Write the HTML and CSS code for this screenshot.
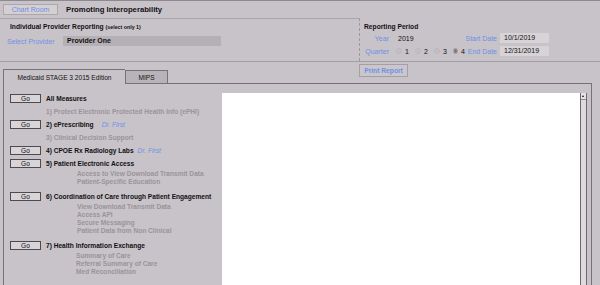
FILE: index.html
```html
<!DOCTYPE html>
<html lang="en">
<head>
    <meta charset="UTF-8">
    <title>Promoting Interoperability</title>
    <link rel="stylesheet" href="styles.css">
</head>
<body>
    <div class="topbar">
        <button class="chart-btn">Chart Room</button>
        <span class="page-title">Promoting Interoperability</span>
    </div>

    <div class="header">
        <div class="provider">
            <div class="section-title indent">Individual Provider Reporting <small>(select only 1)</small></div>
            <div class="provider-row">
                <span class="label provider-label">Select Provider</span>
                <div class="field provider-field">Provider One</div>
            </div>
        </div>
        <div class="period">
            <div class="section-title">Reporting Period</div>
            <div class="period-row">
                <span class="label plabel">Year</span>
                <div class="pmid"><span class="year">2019</span></div>
                <span class="label dlabel">Start Date</span>
                <div class="field date">10/1/2019</div>
            </div>
            <div class="period-row">
                <span class="label plabel">Quarter</span>
                <div class="pmid radios">
                    <span class="radio"><span class="dot"></span>1</span>
                    <span class="radio"><span class="dot"></span>2</span>
                    <span class="radio"><span class="dot"></span>3</span>
                    <span class="radio"><span class="dot on"></span>4</span>
                </div>
                <span class="label dlabel">End Date</span>
                <div class="field date">12/31/2019</div>
            </div>
        </div>
    </div>

    <div class="subrow">
        <div class="tabs">
            <div class="tab active">Medicaid STAGE 3 2015 Edition</div>
            <div class="tab">MIPS</div>
        </div>
        <button class="print-btn">Print Report</button>
    </div>

    <div class="panel">
        <div class="measures">
            <div class="row"><button class="go">Go</button><span class="measure">All Measures</span></div>
            <div class="row"><span class="measure off">1) Protect Electronic Protected Health Info (ePHI)</span></div>
            <div class="row"><button class="go">Go</button><span class="measure">2) ePrescribing</span><span class="vendor">Dr. First</span></div>
            <div class="row"><span class="measure off">3) Clinical Decision Support</span></div>
            <div class="row"><button class="go">Go</button><span class="measure">4) CPOE Rx Radiology Labs</span><span class="vendor short">Dr. First</span></div>
            <div class="row"><button class="go">Go</button><span class="measure">5) Patient Electronic Access</span></div>
            <div class="sub">Access to View Download Transmit Data</div>
            <div class="sub">Patient-Specific Education</div>
            <div class="row gap"><button class="go">Go</button><span class="measure">6) Coordination of Care through Patient Engagement</span></div>
            <div class="sub">View Download Transmit Data</div>
            <div class="sub">Access API</div>
            <div class="sub">Secure Messaging</div>
            <div class="sub">Patient Data from Non Clinical</div>
            <div class="row gap"><button class="go">Go</button><span class="measure">7) Health Information Exchange</span></div>
            <div class="sub left">Summary of Care</div>
            <div class="sub left">Referral Summary of Care</div>
            <div class="sub left">Med Reconciliation</div>
        </div>
        <div class="report"></div>
        <div class="scrollbar">
            <div class="scroll-up"></div>
        </div>
    </div>
</body>
</html>
```

FILE: styles.css
```css
body {
    margin: 0;
    height: 285px;
    overflow: hidden;
    background-color: #c8c3c8;
    font-family: "Liberation Sans", Arial, sans-serif;
    color: #111;
}

button {
    font-family: inherit;
    padding: 0;
    cursor: pointer;
}

.topbar {
    height: 17px;
    border-top: 1px solid #8e898e;
    display: flex;
    align-items: center;
    padding-left: 3px;
}

.chart-btn {
    width: 55px;
    height: 11px;
    background-color: #d3cfd3;
    border: 1px solid #aca7ac;
    color: #6e91e6;
    font-size: 7px;
    line-height: 9px;
}

.page-title {
    margin-left: 8px;
    font-size: 7.7px;
    font-weight: bold;
}

.header {
    display: flex;
    height: 43px;
    border-bottom: 1px solid #a39ea3;
}

.provider {
    width: 352px;
    padding-left: 7px;
    border-top: 1px solid #aaa5aa;
    border-right: 1px dashed #9d989d;
}

.section-title {
    padding-top: 4px;
    font-size: 6.7px;
    line-height: 9px;
    font-weight: bold;
}

.section-title small {
    font-size: 5.3px;
}

.indent {
    margin-left: 3px;
    padding-top: 3px;
}

.label {
    color: #6e91e6;
    font-size: 7px;
    white-space: nowrap;
}

.provider-row {
    display: flex;
    align-items: center;
    margin-top: 4px;
    height: 10px;
}

.provider-label {
    width: 56px;
}

.field {
    height: 10px;
    line-height: 10px;
    font-size: 7px;
    padding-left: 4px;
    box-sizing: border-box;
}

.provider-field {
    width: 158px;
    background-color: #b5b0b5;
    font-weight: bold;
}

.period {
    flex: 1;
    padding-left: 4px;
}

.period-row {
    display: flex;
    align-items: center;
    height: 10px;
    margin-top: 2px;
    margin-left: -4px;
}

.period-row + .period-row {
    margin-top: 3px;
}

.plabel {
    width: 29px;
    text-align: right;
}

.pmid {
    width: 76px;
    flex-shrink: 0;
    font-size: 7px;
    padding-left: 9px;
    box-sizing: border-box;
}

.radios {
    display: flex;
    padding-left: 7px;
}

.radio {
    display: flex;
    align-items: center;
    width: 19px;
    flex-shrink: 0;
}

.radio:last-child {
    width: 12px;
}

.dot {
    width: 4px;
    height: 4px;
    border: 1px solid #bdb8bd;
    border-radius: 50%;
    margin-right: 3px;
    background-color: #c4bfc4;
}

.dot.on {
    background-color: #7d787d;
    border-color: #a9a4a9;
}

.dlabel {
    width: 32px;
    text-align: right;
}

.date {
    width: 49px;
    margin-left: 3px;
    background-color: #d7d3d7;
}

.subrow {
    display: flex;
    height: 21px;
    padding-left: 3px;
}

.tabs {
    width: 356px;
    display: flex;
    align-items: flex-end;
}

.tab {
    height: 13px;
    line-height: 13px;
    font-size: 6.6px;
    text-align: center;
    border: 1px solid #77727a;
    border-bottom: none;
    box-sizing: border-box;
    background-color: #b8b3b8;
    width: 43px;
}

.tab.active {
    width: 122px;
    height: 15px;
    line-height: 15px;
    margin-bottom: -1px;
    background-color: #c8c3c8;
    position: relative;
    z-index: 1;
    border-right: none;
}

.print-btn {
    align-self: flex-start;
    margin-top: 2px;
    width: 49px;
    height: 13px;
    background-color: #cbc6cb;
    border: 1px solid #a5a0a5;
    color: #6e91e6;
    font-size: 6.7px;
    font-weight: bold;
}

.panel {
    display: flex;
    height: 220px;
    width: 587px;
    margin-left: 3px;
    border: 1px solid #77727a;
}

.measures {
    width: 218px;
    padding-top: 8px;
    font-size: 6.6px;
    font-weight: bold;
}

.row {
    height: 13px;
    display: flex;
    align-items: center;
    padding-left: 6px;
}

.row.gap {
    margin-top: 4px;
}

.go {
    width: 31px;
    height: 9px;
    margin-right: 5px;
    background-color: #d8d4d8;
    border: 1px solid #4e4a4e;
    font-size: 6.6px;
    line-height: 7px;
    color: #111;
}

.row .off {
    margin-left: 36px;
}

.off {
    color: #999499;
}

.vendor {
    margin-left: 8px;
    color: #6e91e6;
    font-style: italic;
    font-weight: normal;
}

.vendor.short {
    margin-left: 4px;
}

.sub {
    height: 8px;
    line-height: 8px;
    padding-left: 73px;
    color: #999499;
}

.sub.left {
    padding-left: 72px;
}

.report {
    width: 358px;
    margin-top: 9px;
    background-color: #fff;
}

.scrollbar {
    width: 5px;
    margin-top: 9px;
    background-color: #dedade;
    border-left: 1px solid #6f6a6f;
    border-right: 1px solid #6f6a6f;
}

.scroll-up {
    height: 6px;
    background-color: #e6e3e6;
    border-bottom: 1px solid #8f8a8f;
    position: relative;
}

.scroll-up::after {
    content: "";
    position: absolute;
    left: 1px;
    top: 2px;
    border-left: 1.5px solid transparent;
    border-right: 1.5px solid transparent;
    border-bottom: 2px solid #111;
}
```
